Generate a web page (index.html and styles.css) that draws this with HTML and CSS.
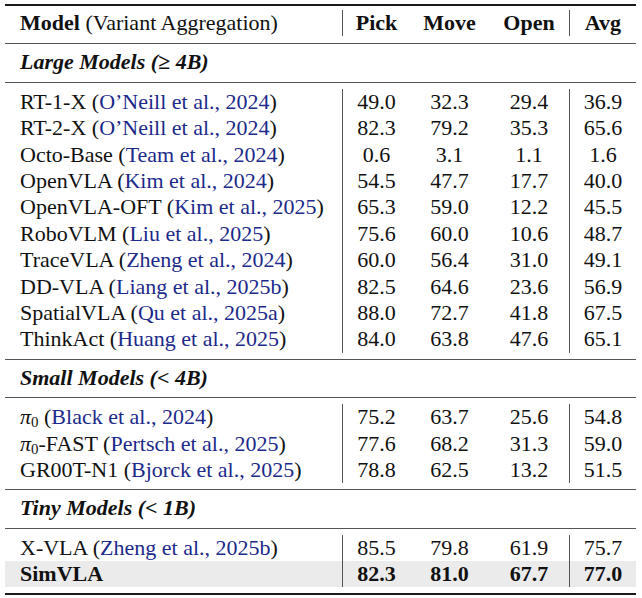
FILE: index.html
```html
<!DOCTYPE html>
<html>
<head>
<meta charset="utf-8">
<link rel="stylesheet" href="styles.css">
</head>
<body>
<div class="table">
  <div class="rule top"></div>
  <div class="block head">
    <div class="row">
      <div class="cell model"><b>Model</b> (Variant Aggregation)</div>
      <div class="cell num vl"><b>Pick</b></div>
      <div class="cell num"><b>Move</b></div>
      <div class="cell num"><b>Open</b></div>
      <div class="cell num vl"><b>Avg</b></div>
    </div>
  </div>
  <div class="rule mid"></div>
  <div class="block section"><div class="sec">Large Models (≥ 4B)</div></div>
  <div class="rule mid"></div>
  <div class="block data">
    <div class="row"><div class="cell model">RT-1-X (<span class="cite">O’Neill et al., 2024</span>)</div><div class="cell num vl">49.0</div><div class="cell num">32.3</div><div class="cell num">29.4</div><div class="cell num vl">36.9</div></div>
    <div class="row"><div class="cell model">RT-2-X (<span class="cite">O’Neill et al., 2024</span>)</div><div class="cell num vl">82.3</div><div class="cell num">79.2</div><div class="cell num">35.3</div><div class="cell num vl">65.6</div></div>
    <div class="row"><div class="cell model">Octo-Base (<span class="cite">Team et al., 2024</span>)</div><div class="cell num vl">0.6</div><div class="cell num">3.1</div><div class="cell num">1.1</div><div class="cell num vl">1.6</div></div>
    <div class="row"><div class="cell model">OpenVLA (<span class="cite">Kim et al., 2024</span>)</div><div class="cell num vl">54.5</div><div class="cell num">47.7</div><div class="cell num">17.7</div><div class="cell num vl">40.0</div></div>
    <div class="row"><div class="cell model">OpenVLA-OFT (<span class="cite">Kim et al., 2025</span>)</div><div class="cell num vl">65.3</div><div class="cell num">59.0</div><div class="cell num">12.2</div><div class="cell num vl">45.5</div></div>
    <div class="row"><div class="cell model">RoboVLM (<span class="cite">Liu et al., 2025</span>)</div><div class="cell num vl">75.6</div><div class="cell num">60.0</div><div class="cell num">10.6</div><div class="cell num vl">48.7</div></div>
    <div class="row"><div class="cell model">TraceVLA (<span class="cite">Zheng et al., 2024</span>)</div><div class="cell num vl">60.0</div><div class="cell num">56.4</div><div class="cell num">31.0</div><div class="cell num vl">49.1</div></div>
    <div class="row"><div class="cell model">DD-VLA (<span class="cite">Liang et al., 2025b</span>)</div><div class="cell num vl">82.5</div><div class="cell num">64.6</div><div class="cell num">23.6</div><div class="cell num vl">56.9</div></div>
    <div class="row"><div class="cell model">SpatialVLA (<span class="cite">Qu et al., 2025a</span>)</div><div class="cell num vl">88.0</div><div class="cell num">72.7</div><div class="cell num">41.8</div><div class="cell num vl">67.5</div></div>
    <div class="row"><div class="cell model">ThinkAct (<span class="cite">Huang et al., 2025</span>)</div><div class="cell num vl">84.0</div><div class="cell num">63.8</div><div class="cell num">47.6</div><div class="cell num vl">65.1</div></div>
  </div>
  <div class="rule mid"></div>
  <div class="block section"><div class="sec">Small Models (&lt; 4B)</div></div>
  <div class="rule mid"></div>
  <div class="block data">
    <div class="row"><div class="cell model"><i class="pi">π</i><sub>0</sub> (<span class="cite">Black et al., 2024</span>)</div><div class="cell num vl">75.2</div><div class="cell num">63.7</div><div class="cell num">25.6</div><div class="cell num vl">54.8</div></div>
    <div class="row"><div class="cell model"><i class="pi">π</i><sub>0</sub>-FAST (<span class="cite">Pertsch et al., 2025</span>)</div><div class="cell num vl">77.6</div><div class="cell num">68.2</div><div class="cell num">31.3</div><div class="cell num vl">59.0</div></div>
    <div class="row"><div class="cell model">GR00T-N1 (<span class="cite">Bjorck et al., 2025</span>)</div><div class="cell num vl">78.8</div><div class="cell num">62.5</div><div class="cell num">13.2</div><div class="cell num vl">51.5</div></div>
  </div>
  <div class="rule mid"></div>
  <div class="block section"><div class="sec">Tiny Models (&lt; 1B)</div></div>
  <div class="rule mid"></div>
  <div class="block data">
    <div class="row"><div class="cell model">X-VLA (<span class="cite">Zheng et al., 2025b</span>)</div><div class="cell num vl">85.5</div><div class="cell num">79.8</div><div class="cell num">61.9</div><div class="cell num vl">75.7</div></div>
    <div class="row ours"><div class="cell model">SimVLA</div><div class="cell num vl">82.3</div><div class="cell num">81.0</div><div class="cell num">67.7</div><div class="cell num vl">77.0</div></div>
  </div>
  <div class="rule top"></div>
</div>
</body>
</html>
```

FILE: styles.css
```css
html, body {
  margin: 0;
  padding: 0;
  background: #ffffff;
}
body {
  font-family: "Liberation Serif", "Times New Roman", serif;
  font-size: 22px;
  color: #111111;
}
.table {
  width: 631px;
  margin-left: 5px;
  padding-top: 4px;
}
.rule.top {
  height: 2px;
  background: #1a1a1a;
}
.rule.mid {
  height: 1px;
  background: #555555;
}
.block.head {
  padding: 4px 0 7px;
}
.block.section {
  padding: 5px 0 6px;
}
.block.data {
  padding: 6px 0;
}
.row {
  display: grid;
  grid-template-columns: 337px 68px 79px 80px 67px;
  height: 26.4px;
  line-height: 26.4px;
}
.cell {
  white-space: nowrap;
}
.model {
  padding-left: 15px;
}
.num {
  text-align: center;
}
.vl {
  border-left: 1px solid #555555;
}
.sec {
  padding-left: 15px;
  line-height: 26.4px;
  font-weight: bold;
  font-style: italic;
}
.cite {
  color: #1c2a8a;
}
.pi {
  font-style: italic;
}
sub {
  font-size: 0.68em;
  line-height: 0;
  vertical-align: -0.22em;
}
.ours {
  background: #ebebeb;
  font-weight: bold;
}
b {
  font-weight: bold;
}
```
